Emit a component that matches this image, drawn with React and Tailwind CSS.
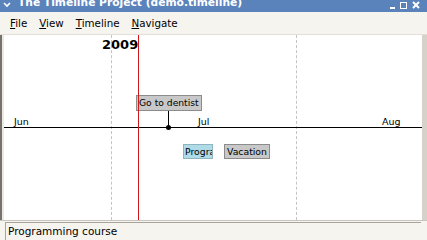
export default function App() {
  const font = { fontFamily: '"DejaVu Sans", sans-serif' };
  return (
    <div className="w-[427px] h-[240px] overflow-hidden flex flex-col bg-[#f6f4ef] text-black" style={font}>
      {/* title bar */}
      <div className="h-[12px] bg-[#5a83bc] flex items-end relative shrink-0">
        <div className="flex items-center h-[12px] -mt-[4px] leading-none">
          <svg width="8" height="6" viewBox="0 0 8 6" className="ml-[3px] mr-[7px] -mt-[3px]">
            <path d="M1 1 L4 4 L7 1" stroke="white" strokeWidth="1.6" fill="none" />
          </svg>
          <span className="text-white font-bold text-[10.7px] -mt-[6px]">The Timeline Project (demo.timeline)</span>
        </div>
        <div className="absolute right-[7px] top-[1px] flex items-center gap-[5px]">
          <div className="w-[5px] h-[2px] bg-white mt-[6px]" />
          <div className="w-[7px] h-[7px] border-[1.5px] border-white" />
          <svg width="8" height="8" viewBox="0 0 8 8"><path d="M1 1 L7 7 M7 1 L1 7" stroke="white" strokeWidth="2" /></svg>
        </div>
      </div>
      {/* menu bar */}
      <div className="h-[23px] shrink-0 flex items-center text-[10.3px] pl-[10px] gap-[12px] border-b border-[#e3dfd8] pt-[1px]">
        <span><span className="underline">F</span>ile</span>
        <span><span className="underline">V</span>iew</span>
        <span><span className="underline">T</span>imeline</span>
        <span><span className="underline">N</span>avigate</span>
      </div>
      {/* canvas */}
      <div className="flex-1 flex border-l-[2px] border-[#76736e] border-r-[5px] border-r-[#d6d2ca]">
        <div className="relative flex-1 bg-white overflow-hidden border-l-[2px] border-[#ece9e2]">
          {/* dotted vertical lines */}
          <div className="absolute left-[107px] top-0 bottom-0 border-l border-dashed border-[#c4c4c4]" />
          <div className="absolute left-[292px] top-0 bottom-0 border-l border-dashed border-[#c4c4c4]" />
          {/* year */}
          <div className="absolute left-[98px] top-[3px] text-[13px] font-bold leading-none">2009</div>
          {/* month labels */}
          <div className="absolute left-[10px] top-[82px] text-[9.5px] leading-none">Jun</div>
          <div className="absolute left-[194px] top-[82px] text-[9.5px] leading-none">Jul</div>
          <div className="absolute left-[378px] top-[82px] text-[9.5px] leading-none">Aug</div>
          {/* axis */}
          <div className="absolute left-0 right-0 top-[92px] h-[1px] bg-black" />
          {/* event connector */}
          <div className="absolute left-[164px] top-[76px] w-[1px] h-[16px] bg-black" />
          <div className="absolute left-[162px] top-[90px] w-[5px] h-[5px] rounded-full bg-black" />
          {/* Go to dentist */}
          <div className="absolute left-[132px] top-[60px] h-[16px] px-[2px] bg-[#c8c8c8] border border-[#8c8c8c] text-[9.2px] leading-[14px] whitespace-nowrap">Go to dentist</div>
          {/* Programming */}
          <div className="absolute left-[179px] top-[109px] w-[30px] h-[15px] overflow-hidden bg-[#aedbe7] border border-[#8fb4c0] text-[9.3px] leading-[13px] pl-[1px] whitespace-nowrap">Programming course</div>
          {/* Vacation */}
          <div className="absolute left-[220px] top-[109px] h-[15px] px-[2px] bg-[#c8c8c8] border border-[#8c8c8c] text-[9.3px] leading-[13px] whitespace-nowrap">Vacation</div>
          {/* red now line */}
          <div className="absolute left-[134px] top-0 bottom-0 w-[1px] bg-[#d0181a]" />
        </div>
      </div>
      {/* status bar */}
      <div className="h-[20px] shrink-0 border-t border-[#c9c5bd] flex pl-[5px] pr-[6px] pt-[1px]">
        <div className="flex-1 border-l border-t border-[#a8a49c] text-[10.5px] leading-[17px] pl-[2px]">Programming course</div>
      </div>
    </div>
  );
}
